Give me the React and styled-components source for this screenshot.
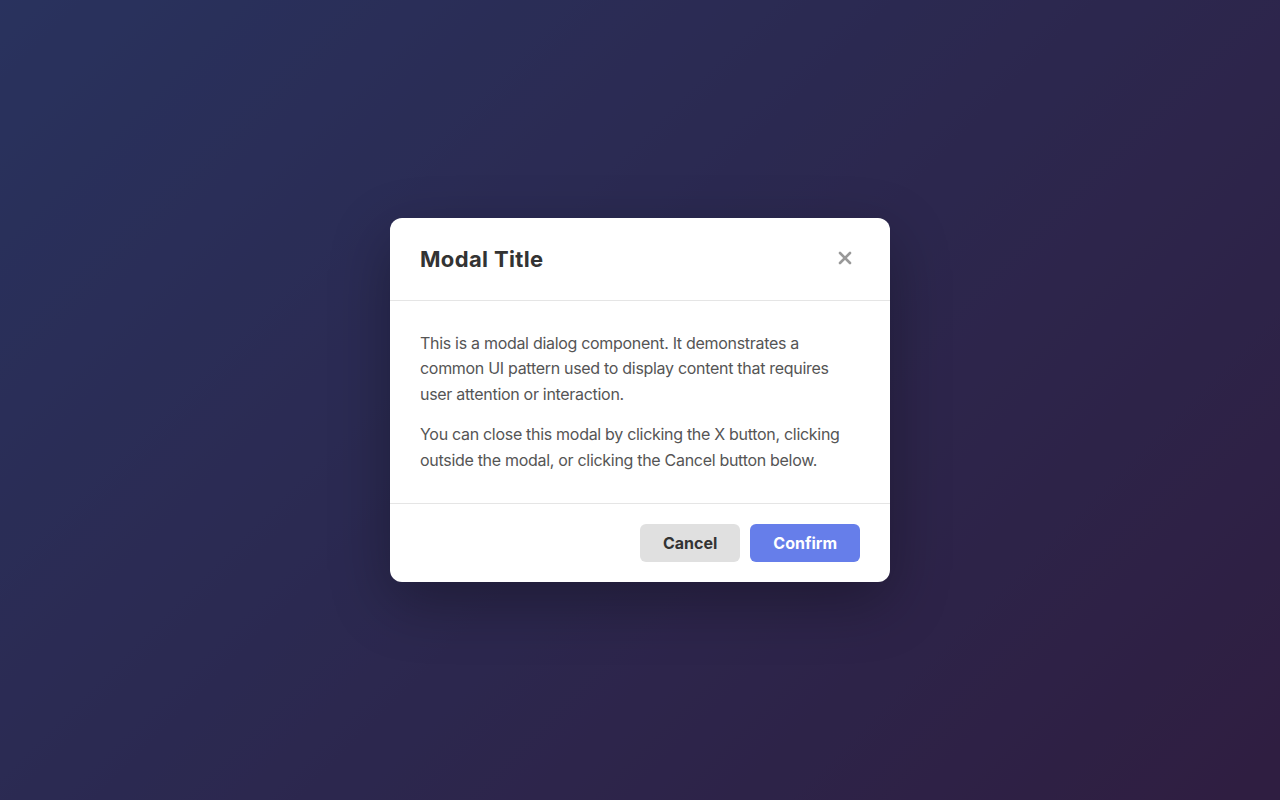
import React from "react";
import styled, { createGlobalStyle } from "styled-components";

const Global = createGlobalStyle`
  html, body { margin: 0; padding: 0; height: 100%; }
  body { font-family: Inter, "Noto Sans", sans-serif; }
  #root { height: 100%; }
  * { box-sizing: border-box; }
`;

const Page = styled.div`
  position: relative;
  width: 100%;
  height: 100vh;
  background: linear-gradient(135deg, #667eea 0%, #764ba2 100%);
  overflow: hidden;
`;

const Overlay = styled.div`
  position: absolute;
  inset: 0;
  background: rgba(0, 0, 0, 0.6);
  display: flex;
  align-items: center;
  justify-content: center;
`;

const Dialog = styled.div`
  width: 500px;
  background: #fff;
  border-radius: 12px;
  box-shadow: 0 20px 60px rgba(0, 0, 0, 0.3);
  overflow: hidden;
`;

const Header = styled.div`
  display: flex;
  align-items: center;
  justify-content: space-between;
  height: 83px;
  padding: 0 30px;
  border-bottom: 1px solid #e5e5e5;
`;

const Title = styled.h2`
  margin: 0;
  font-size: 22px;
  font-weight: 700;
  color: #333;
  letter-spacing: 0.35px;
`;

const CloseButton = styled.button`
  border: none;
  background: none;
  padding: 8px;
  margin-top: -2px;
  cursor: pointer;
  display: flex;
  color: #999;
`;

const Body = styled.div`
  padding: 30px;
  border-bottom: 1px solid #e5e5e5;
`;

const Paragraph = styled.p`
  margin: 0 0 14.5px;
  font-size: 16px;
  line-height: 1.6;
  color: #555;
  letter-spacing: -0.3px;
  &:last-child { margin-bottom: 0; }
`;

const Footer = styled.div`
  display: flex;
  justify-content: flex-end;
  gap: 10px;
  padding: 20px 30px;
`;

const Button = styled.button`
  height: 38px;
  padding: 0 23px;
  border: none;
  border-radius: 6px;
  font-family: Inter, "Noto Sans", sans-serif;
  font-size: 16px;
  font-weight: 700;
  cursor: pointer;
  background: ${(p) => (p.$primary ? "#667eea" : "#e0e0e0")};
  color: ${(p) => (p.$primary ? "#fff" : "#333")};
`;

export default function App() {
  return (
    <>
      <Global />
      <Page>
        <Overlay>
          <Dialog>
            <Header>
              <Title>Modal Title</Title>
              <CloseButton aria-label="Close">
                <svg width="14" height="14" viewBox="0 0 14 14">
                  <path d="M2 2 L12 12 M12 2 L2 12" stroke="currentColor" strokeWidth="2.6" strokeLinecap="round" />
                </svg>
              </CloseButton>
            </Header>
            <Body>
              <Paragraph>
                This is a modal dialog component. It demonstrates a common UI pattern used to display content that requires user attention or interaction.
              </Paragraph>
              <Paragraph>
                You can close this modal by clicking the X button, clicking outside the modal, or clicking the Cancel button below.
              </Paragraph>
            </Body>
            <Footer>
              <Button>Cancel</Button>
              <Button $primary>Confirm</Button>
            </Footer>
          </Dialog>
        </Overlay>
      </Page>
    </>
  );
}
